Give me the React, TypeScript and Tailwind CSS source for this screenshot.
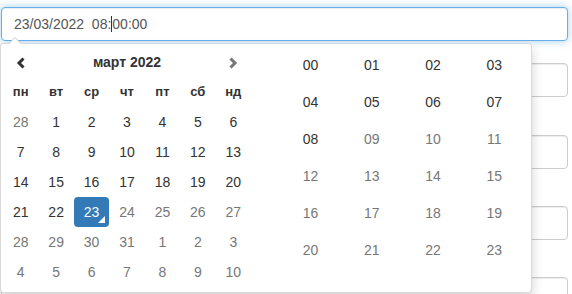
import React from 'react';

type Day = { n: number; muted?: boolean; active?: boolean };

const weekdays = ['пн', 'вт', 'ср', 'чт', 'пт', 'сб', 'нд'];

const buildWeeks = (): Day[][] => {
  const days: Day[] = [{ n: 28, muted: true }];
  for (let i = 1; i <= 31; i++) {
    days.push({ n: i, muted: i > 23, active: i === 23 });
  }
  for (let i = 1; i <= 10; i++) days.push({ n: i, muted: true });
  const weeks: Day[][] = [];
  for (let i = 0; i < days.length; i += 7) weeks.push(days.slice(i, i + 7));
  return weeks;
};

const hours = Array.from({ length: 24 }, (_, i) => i);

const Chevron: React.FC<{ dir: 'left' | 'right'; className?: string }> = ({ dir, className }) => (
  <svg width="10" height="12" viewBox="0 0 10 12" className={className}>
    <polyline
      points={dir === 'left' ? '7.5,1.5 3,6 7.5,10.5' : '2.5,1.5 7,6 2.5,10.5'}
      fill="none"
      stroke="currentColor"
      strokeWidth="3"
    />
  </svg>
);

const Picker: React.FC = () => {
  const weeks = buildWeeks();

  return (
    <div className="absolute top-[43px] left-0 w-[532px] h-[250px] bg-white border border-black/15 rounded shadow-[0_6px_12px_rgba(0,0,0,0.175)] pl-[2px] pt-[3px] flex">
      {/* Arrow */}
      <div className="absolute -top-[7px] left-[7px] w-0 h-0 border-x-[7px] border-x-transparent border-b-[7px] border-b-[#ccc]" />
      <div className="absolute -top-[6px] left-[8px] w-0 h-0 border-x-[6px] border-x-transparent border-b-[6px] border-b-white" />

      {/* Calendar */}
      <div className="w-[248px] grid grid-cols-7 auto-rows-[30px] text-center text-[14px] text-[#333]">
        <div className="h-[31px] flex items-center justify-center">
          <Chevron dir="left" className="text-[#333]" />
        </div>
        <div className="col-span-5 h-[31px] flex items-center justify-center font-bold">март 2022</div>
        <div className="h-[31px] flex items-center justify-center">
          <Chevron dir="right" className="text-[#777]" />
        </div>

        {weekdays.map((d) => (
          <div key={d} className="flex items-center justify-center font-bold text-[13px]">
            {d}
          </div>
        ))}

        {weeks.map((week, wi) =>
          week.map((day, di) => (
            <div
              key={`${wi}-${di}`}
              className={
                day.active
                  ? 'relative flex items-center justify-center bg-[#337ab7] text-white rounded'
                  : day.muted
                  ? 'flex items-center justify-center text-[#777]'
                  : 'flex items-center justify-center'
              }
            >
              {day.n}
              {day.active && (
                <span className="absolute bottom-[4px] right-[4px] w-0 h-0 border-l-[7px] border-l-transparent border-b-[7px] border-b-white" />
              )}
            </div>
          ))
        )}
      </div>

      {/* Hours */}
      <div className="ml-[29px] w-[245px] grid grid-cols-4 auto-rows-[37px] content-start text-center text-[14px]">
        {hours.map((h) => (
          <div key={h} className={h <= 8 ? 'flex items-center justify-center text-[#333]' : 'flex items-center justify-center text-[#777]'}>
            {String(h).padStart(2, '0')}
          </div>
        ))}
      </div>
    </div>
  );
};

const App: React.FC = () => {
  const field = 'h-[34px] w-[567px] bg-white border border-[#ccc] rounded shadow-[inset_0_1px_1px_rgba(0,0,0,0.075)]';

  return (
    <div className="relative w-[572px] h-[294px] overflow-hidden bg-white font-['Liberation_Sans',Arial,sans-serif]">
      <div className="pl-px pt-[7px] flex flex-col">
        {/* Active input */}
        <div className="h-[34px] w-[567px] bg-white border border-[#66afe9] rounded shadow-[inset_0_1px_1px_rgba(0,0,0,0.075),0_0_8px_rgba(102,175,233,0.6)] px-3 flex items-center text-[14px] text-[#555] whitespace-pre">
          <span>23/03/2022  08:</span>
          <span className="inline-block w-px h-[16px] bg-[#333]" />
          <span>00:00</span>
        </div>
        <div className={`mt-[22px] ${field}`} />
        <div className={`mt-[38px] ${field}`} />
        <div className={`mt-[37px] ${field}`} />
        <div className={`mt-[37px] ${field}`} />
      </div>
      <Picker />
    </div>
  );
};

export default App;
